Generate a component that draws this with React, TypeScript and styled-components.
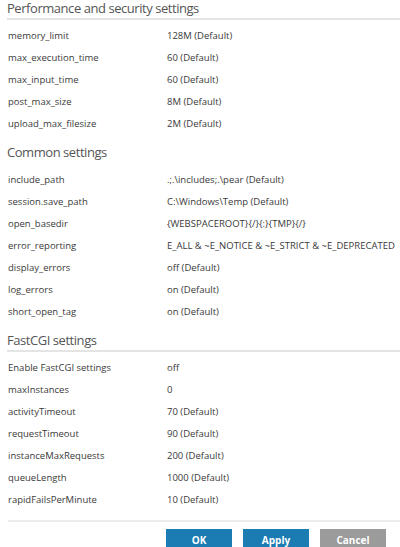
import styled, { createGlobalStyle } from "styled-components";

const GlobalStyle = createGlobalStyle`
  html, body {
    margin: 0;
    padding: 0;
    background: #ffffff;
  }
  body {
    font-family: "Open Sans", "DejaVu Sans", sans-serif;
    color: #333333;
  }
`;

const Page = styled.div`
  width: 400px;
  padding: 0 0 0 7px;
  box-sizing: border-box;
`;

const Section = styled.section`
  margin-bottom: 9px;
`;

const Title = styled.h2<{ $ruled?: boolean }>`
  margin: 0;
  font-size: 13px;
  letter-spacing: -0.45px;
  font-weight: 400;
  line-height: 17px;
  color: #555555;
  padding-bottom: 1px;
  border-bottom: ${(p) => (p.$ruled ? "2px solid #e4e4e4" : "2px solid transparent")};
`;

const Rows = styled.div`
  padding-top: 5px;
`;

const Row = styled.div`
  display: grid;
  grid-template-columns: 159px 1fr;
  height: 22px;
  line-height: 22px;
  font-size: 9.5px;
  padding-left: 1px;
  white-space: nowrap;
`;

const Label = styled.span`
  color: #3a3a3a;
`;

const Value = styled.span`
  color: #3a3a3a;
`;

const Footer = styled.div`
  border-top: 2px solid #ececec;
  margin-left: 1px;
  margin-top: 3px;
  padding: 7px 0 0 158px;
  display: flex;
  gap: 11px;
`;

const Button = styled.button<{ $variant?: "primary" | "muted" }>`
  width: 66px;
  height: 22px;
  border: none;
  padding: 0;
  font-family: "Open Sans", "DejaVu Sans", sans-serif;
  font-weight: 700;
  font-size: 10px;
  line-height: 22px;
  color: #ffffff;
  background: ${(p) => (p.$variant === "muted" ? "#9b9b9b" : "#1b7bb3")};
`;

interface Setting {
  name: string;
  value: string;
}

const sections: { title: string; ruled: boolean; rows: Setting[] }[] = [
  {
    title: "Performance and security settings",
    ruled: true,
    rows: [
      { name: "memory_limit", value: "128M (Default)" },
      { name: "max_execution_time", value: "60 (Default)" },
      { name: "max_input_time", value: "60 (Default)" },
      { name: "post_max_size", value: "8M (Default)" },
      { name: "upload_max_filesize", value: "2M (Default)" },
    ],
  },
  {
    title: "Common settings",
    ruled: false,
    rows: [
      { name: "include_path", value: ".;.\\includes;.\\pear (Default)" },
      { name: "session.save_path", value: "C:\\Windows\\Temp (Default)" },
      { name: "open_basedir", value: "{WEBSPACEROOT}{/}{:}{TMP}{/}" },
      {
        name: "error_reporting",
        value: "E_ALL & ~E_NOTICE & ~E_STRICT & ~E_DEPRECATED",
      },
      { name: "display_errors", value: "off (Default)" },
      { name: "log_errors", value: "on (Default)" },
      { name: "short_open_tag", value: "on (Default)" },
    ],
  },
  {
    title: "FastCGI settings",
    ruled: true,
    rows: [
      { name: "Enable FastCGI settings", value: "off" },
      { name: "maxInstances", value: "0" },
      { name: "activityTimeout", value: "70 (Default)" },
      { name: "requestTimeout", value: "90 (Default)" },
      { name: "instanceMaxRequests", value: "200 (Default)" },
      { name: "queueLength", value: "1000 (Default)" },
      { name: "rapidFailsPerMinute", value: "10 (Default)" },
    ],
  },
];

function App() {
  return (
    <Page>
      <GlobalStyle />
      {sections.map((s) => (
        <Section key={s.title}>
          <Title $ruled={s.ruled}>{s.title}</Title>
          <Rows>
            {s.rows.map((r) => (
              <Row key={r.name}>
                <Label>{r.name}</Label>
                <Value>{r.value}</Value>
              </Row>
            ))}
          </Rows>
        </Section>
      ))}
      <Footer>
        <Button>OK</Button>
        <Button>Apply</Button>
        <Button $variant="muted">Cancel</Button>
      </Footer>
    </Page>
  );
}

export default App;
